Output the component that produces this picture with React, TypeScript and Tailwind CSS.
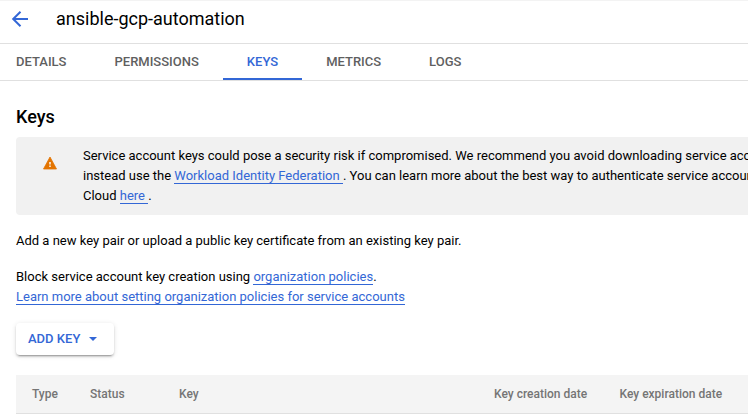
import React from 'react';

const link = 'text-[#3367d6] border-b border-[#3367d6]';

const tabs = [
  { label: 'DETAILS', active: false },
  { label: 'PERMISSIONS', active: false },
  { label: 'KEYS', active: true },
  { label: 'METRICS', active: false },
  { label: 'LOGS', active: false },
];

export default function App() {
  return (
    <div className="h-[416px] w-[748px] overflow-hidden bg-white font-['Roboto',sans-serif] text-[13px] leading-5 text-black">
      <header className="flex h-11 items-center border-t border-b border-t-[#f3f3f3] border-b-[#e0e0e0] pb-[7px] pl-2">
        <svg className="h-6 w-6 shrink-0" viewBox="0 0 24 24" fill="none" stroke="#3367d6" strokeWidth="2">
          <path d="M20 12H5.5M12.5 4.7L5.2 12l7.3 7.3" />
        </svg>
        <h1 className="ml-6 text-[18px] leading-6">ansible-gcp-automation</h1>
      </header>
      <nav className="-ml-2 flex h-[37px] border-b border-[#e0e0e0] text-[13px] font-medium">
        {tabs.map((t) => (
          <div
            key={t.label}
            className={
              t.active
                ? 'flex h-9 items-center border-b-2 border-[#3367d6] px-6 pt-0.5 text-[#3367d6]'
                : 'flex h-9 items-center px-6 text-[#5f5f5f]'
            }
          >
            {t.label}
          </div>
        ))}
      </nav>
      <main className="pl-4 pt-6">
        <h2 className="text-[18px] font-medium leading-6">Keys</h2>
        <div className="mt-2 flex h-[78px] w-[760px] rounded bg-[#f1f1f1] pt-[9px]">
          <svg className="ml-[26px] mt-[9px] h-4 w-4 shrink-0" viewBox="0 0 16 16">
            <path d="M8 2l6.5 12h-13z" fill="#e37400" stroke="#e37400" strokeWidth="0.8" strokeLinejoin="round" />
            <path d="M8 7v2.6M8 10.6v1.4" stroke="#fff" strokeWidth="1.4" />
          </svg>
          <div className="ml-[25px] whitespace-nowrap">
            <div>Service account keys could pose a security risk if compromised. We recommend you avoid downloading service account keys and</div>
            <div>instead use the <a className={link}>Workload Identity Federation </a>. You can learn more about the best way to authenticate service accounts on Google</div>
            <div>Cloud <a className={link}>here </a>.</div>
          </div>
        </div>
        <p className="mt-4">Add a new key pair or upload a public key certificate from an existing key pair.</p>
        <p className="mt-4">Block service account key creation using <a className={link}>organization policies</a>.</p>
        <p><a className={link}>Learn more about setting organization policies for service accounts</a></p>
        <button className="mt-4 flex h-8 w-[98px] items-center rounded bg-white pl-3 font-medium text-[#3367d6] shadow-[0_3px_1px_-2px_rgba(0,0,0,0.2),0_2px_2px_rgba(0,0,0,0.14),0_1px_5px_rgba(0,0,0,0.12)]">
          ADD KEY
          <svg className="ml-[9px] h-1 w-2" viewBox="0 0 8 4" fill="#3367d6"><path d="M0 0h8L4 4z" /></svg>
        </button>
        <div className="mt-5 flex h-[39px] w-[760px] items-center border-b border-[#e0e0e0] bg-[#f4f4f4] pl-4 text-[12px] font-medium text-[#757575]">
          <span className="w-[58px]">Type</span>
          <span className="w-[89px]">Status</span>
          <span className="w-[315px]">Key</span>
          <span className="w-[125.5px]">Key creation date</span>
          <span>Key expiration date</span>
        </div>
      </main>
    </div>
  );
}
